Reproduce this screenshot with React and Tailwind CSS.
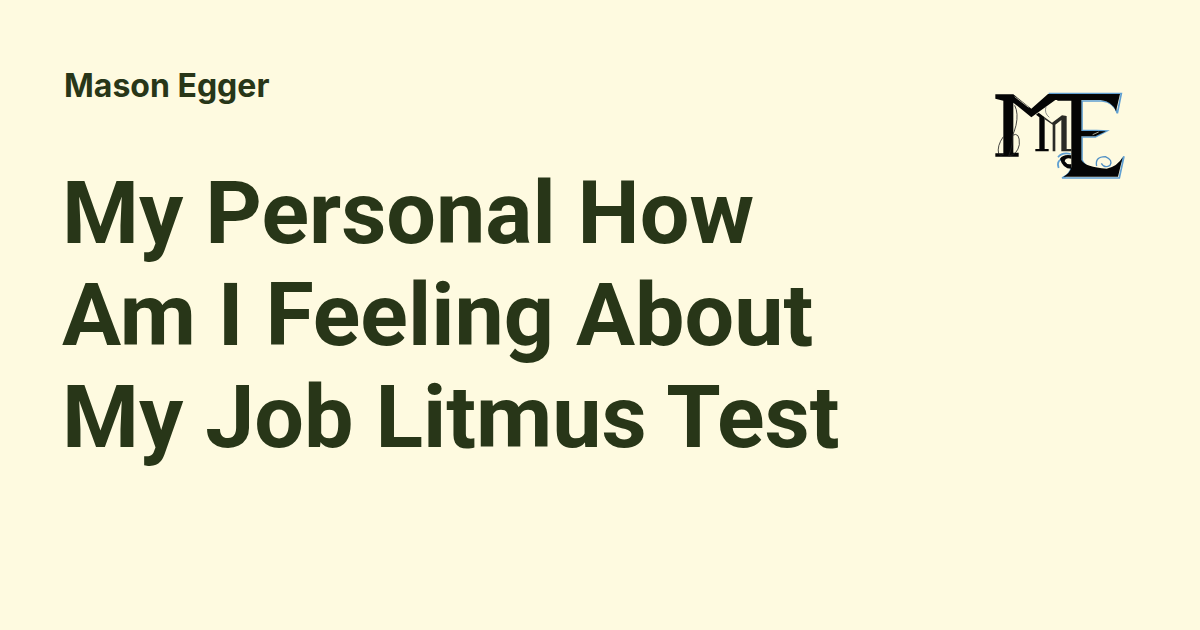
const Logo = () => (
  <svg viewBox="0 0 480 330" className="w-[160px] h-[110px] shrink-0">
    {/* blue outline behind the E */}
    <g fill="none" stroke="#5f9fd2" strokeWidth="5">
      <path d="M206 41H424L412 100Q402 66 366 63H306V152H350L380 153L346 171H306V240Q318 270 380 272Q416 264 432 229L418 294H246Q270 284 274 262" />
      <path d="M234 232Q246 216 272 222M236 264Q226 240 258 232" />
    </g>
    <path d="M350 258Q344 230 376 230Q400 240 390 256Q374 266 364 250" fill="none" stroke="#4f8fc4" strokeWidth="4" />
    {/* E */}
    <g fill="#050505">
      <path d="M232 42H420L408 94Q398 64 362 60H304V153H352L378 154L346 169H304V240Q316 262 380 266Q412 260 428 232L414 290H250Q270 280 274 262V62H232Z" />
      <path d="M240 236Q250 222 274 226V236Q256 232 254 244Q262 256 274 252V266Q248 266 240 236Z" />
    </g>
    {/* big M */}
    <path d="M46 43H100L154 86L204 42H276V60H226L154 112L100 68V218H116V230H46V220H70V62L46 56Z" fill="#050505" />
    {/* small m */}
    <g fill="#050505">
      <path d="M178 112L168 104L176 98L194 112V207H206V214H166V207H178Z" />
      <path d="M194 112L216 128L246 106L260 108V207H274V214H244V120L226 134V214H218V134L194 118Z" opacity="0.85" />
    </g>
    {/* thin flourishes */}
    <g fill="none" stroke="#222" strokeWidth="2.5">
      <path d="M104 76Q116 100 108 136Q102 160 97 166" />
      <path d="M97 166Q120 154 118 194Q112 224 86 228Q100 192 97 166" />
      <path d="M70 170Q50 198 56 222Q62 230 72 222" />
      <path d="M198 80Q192 100 208 112" stroke="#777" />
    </g>
    <g fill="none" stroke="#fefae0" strokeWidth="2">
      <path d="M104 50L146 82" />
      <path d="M338 164L356 156" />
    </g>
  </svg>
);

export default function App() {
  return (
    <div className="w-[1200px] h-[630px] overflow-hidden bg-[#fefae0] text-[#283618] font-['Roboto',sans-serif] font-bold pl-16 pr-[60px] pt-20">
      <div className="flex justify-between items-start">
        <p className="font-['Inter',sans-serif] text-[32px] leading-[11px]">Mason Egger</p>
        <Logo />
      </div>
      <h1 className="text-[88px] leading-[102px] -mt-[28px] -ml-0.5">
        My Personal How
        <br />
        Am I Feeling About
        <br />
        My Job Litmus Test
      </h1>
    </div>
  );
}
